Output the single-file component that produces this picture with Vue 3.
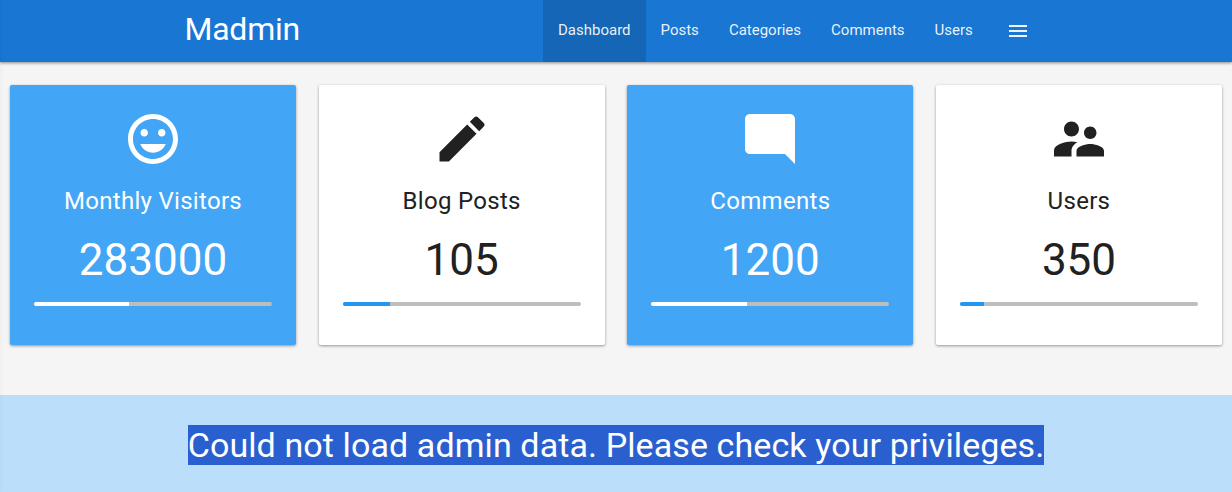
<script setup>
const links = [
  { label: 'Dashboard', active: true },
  { label: 'Posts' },
  { label: 'Categories' },
  { label: 'Comments' },
  { label: 'Users' },
]
const cards = [
  { title: 'Monthly Visitors', value: '283000', pct: 40, accent: true, icon: 'smile' },
  { title: 'Blog Posts', value: '105', pct: 20, accent: false, icon: 'edit' },
  { title: 'Comments', value: '1200', pct: 40, accent: true, icon: 'comment' },
  { title: 'Users', value: '350', pct: 10, accent: false, icon: 'people' },
]
</script>

<template>
  <div class="page">
    <div class="edge"></div>
    <nav class="nav">
      <div class="brand">Madmin</div>
      <ul class="links">
        <li v-for="l in links" :key="l.label" class="link" :class="{ active: l.active }">{{ l.label }}</li>
        <li class="link menu">
          <svg width="24" height="24" viewBox="0 0 24 24" fill="currentColor">
            <path d="M3 18h18v-2H3v2zm0-5h18v-2H3v2zm0-7v2h18V6H3z" />
          </svg>
        </li>
      </ul>
    </nav>
    <main class="grid">
      <section v-for="c in cards" :key="c.title" class="card" :class="{ accent: c.accent }">
        <svg class="icon" width="60" height="60" viewBox="0 0 24 24" fill="currentColor">
          <path v-if="c.icon === 'smile'" d="M11.99 2C6.47 2 2 6.48 2 12s4.47 10 9.99 10C17.52 22 22 17.52 22 12S17.52 2 11.99 2zM12 20c-4.42 0-8-3.58-8-8s3.58-8 8-8 8 3.58 8 8-3.58 8-8 8zm3.5-9c.83 0 1.5-.67 1.5-1.5S16.33 8 15.5 8 14 8.67 14 9.5s.67 1.5 1.5 1.5zm-7 0c.83 0 1.5-.67 1.5-1.5S9.33 8 8.5 8 7 8.67 7 9.5 7.67 11 8.5 11zm3.5 6.5c2.33 0 4.31-1.46 5.11-3.5H6.89c.8 2.04 2.78 3.5 5.11 3.5z" />
          <path v-else-if="c.icon === 'edit'" d="M3 17.25V21h3.75L17.81 9.94l-3.75-3.75L3 17.25zM20.71 7.04c.39-.39.39-1.02 0-1.41l-2.34-2.34c-.39-.39-1.02-.39-1.41 0l-1.83 1.83 3.75 3.75 1.83-1.83z" />
          <path v-else-if="c.icon === 'comment'" d="M22 4c0-1.1-.9-2-2-2H4c-1.1 0-2 .9-2 2v12c0 1.1.9 2 2 2h14l4 4V4z" />
          <path v-else d="M16.5 12c1.38 0 2.49-1.12 2.49-2.5S17.88 7 16.5 7C15.12 7 14 8.12 14 9.5s1.12 2.5 2.5 2.5zM9 11c1.66 0 2.99-1.34 2.99-3S10.66 5 9 5C7.34 5 6 6.34 6 8s1.34 3 3 3zm7.5 3c-1.83 0-5.5.92-5.5 2.75V19h11v-2.25c0-1.83-3.67-2.75-5.5-2.75zM9 13c-2.33 0-7 1.17-7 3.5V19h7v-2.25c0-.85.33-2.34 2.37-3.47C10.5 13.1 9.66 13 9 13z" />
        </svg>
        <h2 class="title">{{ c.title }}</h2>
        <div class="value">{{ c.value }}</div>
        <div class="track"><div class="fill" :style="{ width: c.pct + '%' }"></div></div>
      </section>
    </main>
    <footer class="banner"><span class="msg">Could not load admin data. Please check your privileges.</span></footer>
  </div>
</template>

<style scoped>
.page {
  position: relative;
  width: 1232px;
  height: 492px;
  overflow: hidden;
  background: #f5f5f5;
  font-family: Roboto, sans-serif;
  color: #212121;
}
.edge {
  position: absolute;
  left: -1px;
  top: 0;
  bottom: 0;
  width: 1px;
  z-index: 3;
  box-shadow: 0 0 4px rgba(0, 0, 0, 0.12);
}
.nav {
  position: relative;
  z-index: 2;
  display: flex;
  height: 62px;
  background: #1976d2;
  color: #fff;
  box-shadow: 0 1px 3px rgba(0, 0, 0, 0.45);
}
.brand {
  box-sizing: border-box;
  width: 543px;
  padding-left: 184.5px;
  font-size: 32px;
  font-weight: 400;
  line-height: 58px;
  letter-spacing: -0.25px;
}
.links {
  display: flex;
  margin: 0;
  padding: 0;
  list-style: none;
}
.link {
  padding: 0 15px;
  font-size: 15px;
  line-height: 60px;
  color: rgba(255, 255, 255, 0.92);
}
.link.active {
  background: rgba(0, 0, 0, 0.13);
}
.menu {
  display: flex;
  align-items: center;
  padding-left: 18px;
}
.grid {
  display: grid;
  grid-template-columns: repeat(4, 286px);
  column-gap: 22.67px;
  padding: 23px 10px 50px;
}
.card {
  height: 260px;
  box-sizing: border-box;
  padding: 24px 24px 0;
  border-radius: 2px;
  background: #fff;
  text-align: center;
  box-shadow: 0 1px 3px rgba(0, 0, 0, 0.4);
}
.card.accent {
  background: #42a5f5;
  color: #fff;
}
.icon {
  display: block;
  margin: 0 auto;
}
.title {
  margin: 17px 0 0;
  font-size: 24px;
  font-weight: 400;
  line-height: 30px;
  letter-spacing: 0.3px;
}
.value {
  margin-top: 15px;
  font-size: 44px;
  line-height: 58px;
}
.track {
  height: 4px;
  margin-top: 13px;
  overflow: hidden;
  border-radius: 2px;
  background: #bdbdbd;
}
.fill {
  height: 100%;
  background: #2196f3;
}
.accent .fill {
  background: #fff;
}
.banner {
  height: 97px;
  padding-top: 30px;
  box-sizing: border-box;
  background: #bbdefb;
  text-align: center;
  font-size: 34px;
  line-height: 40px;
  letter-spacing: 0.1px;
  color: #fff;
}
.msg {
  background: #2a5fd0;
}
</style>
